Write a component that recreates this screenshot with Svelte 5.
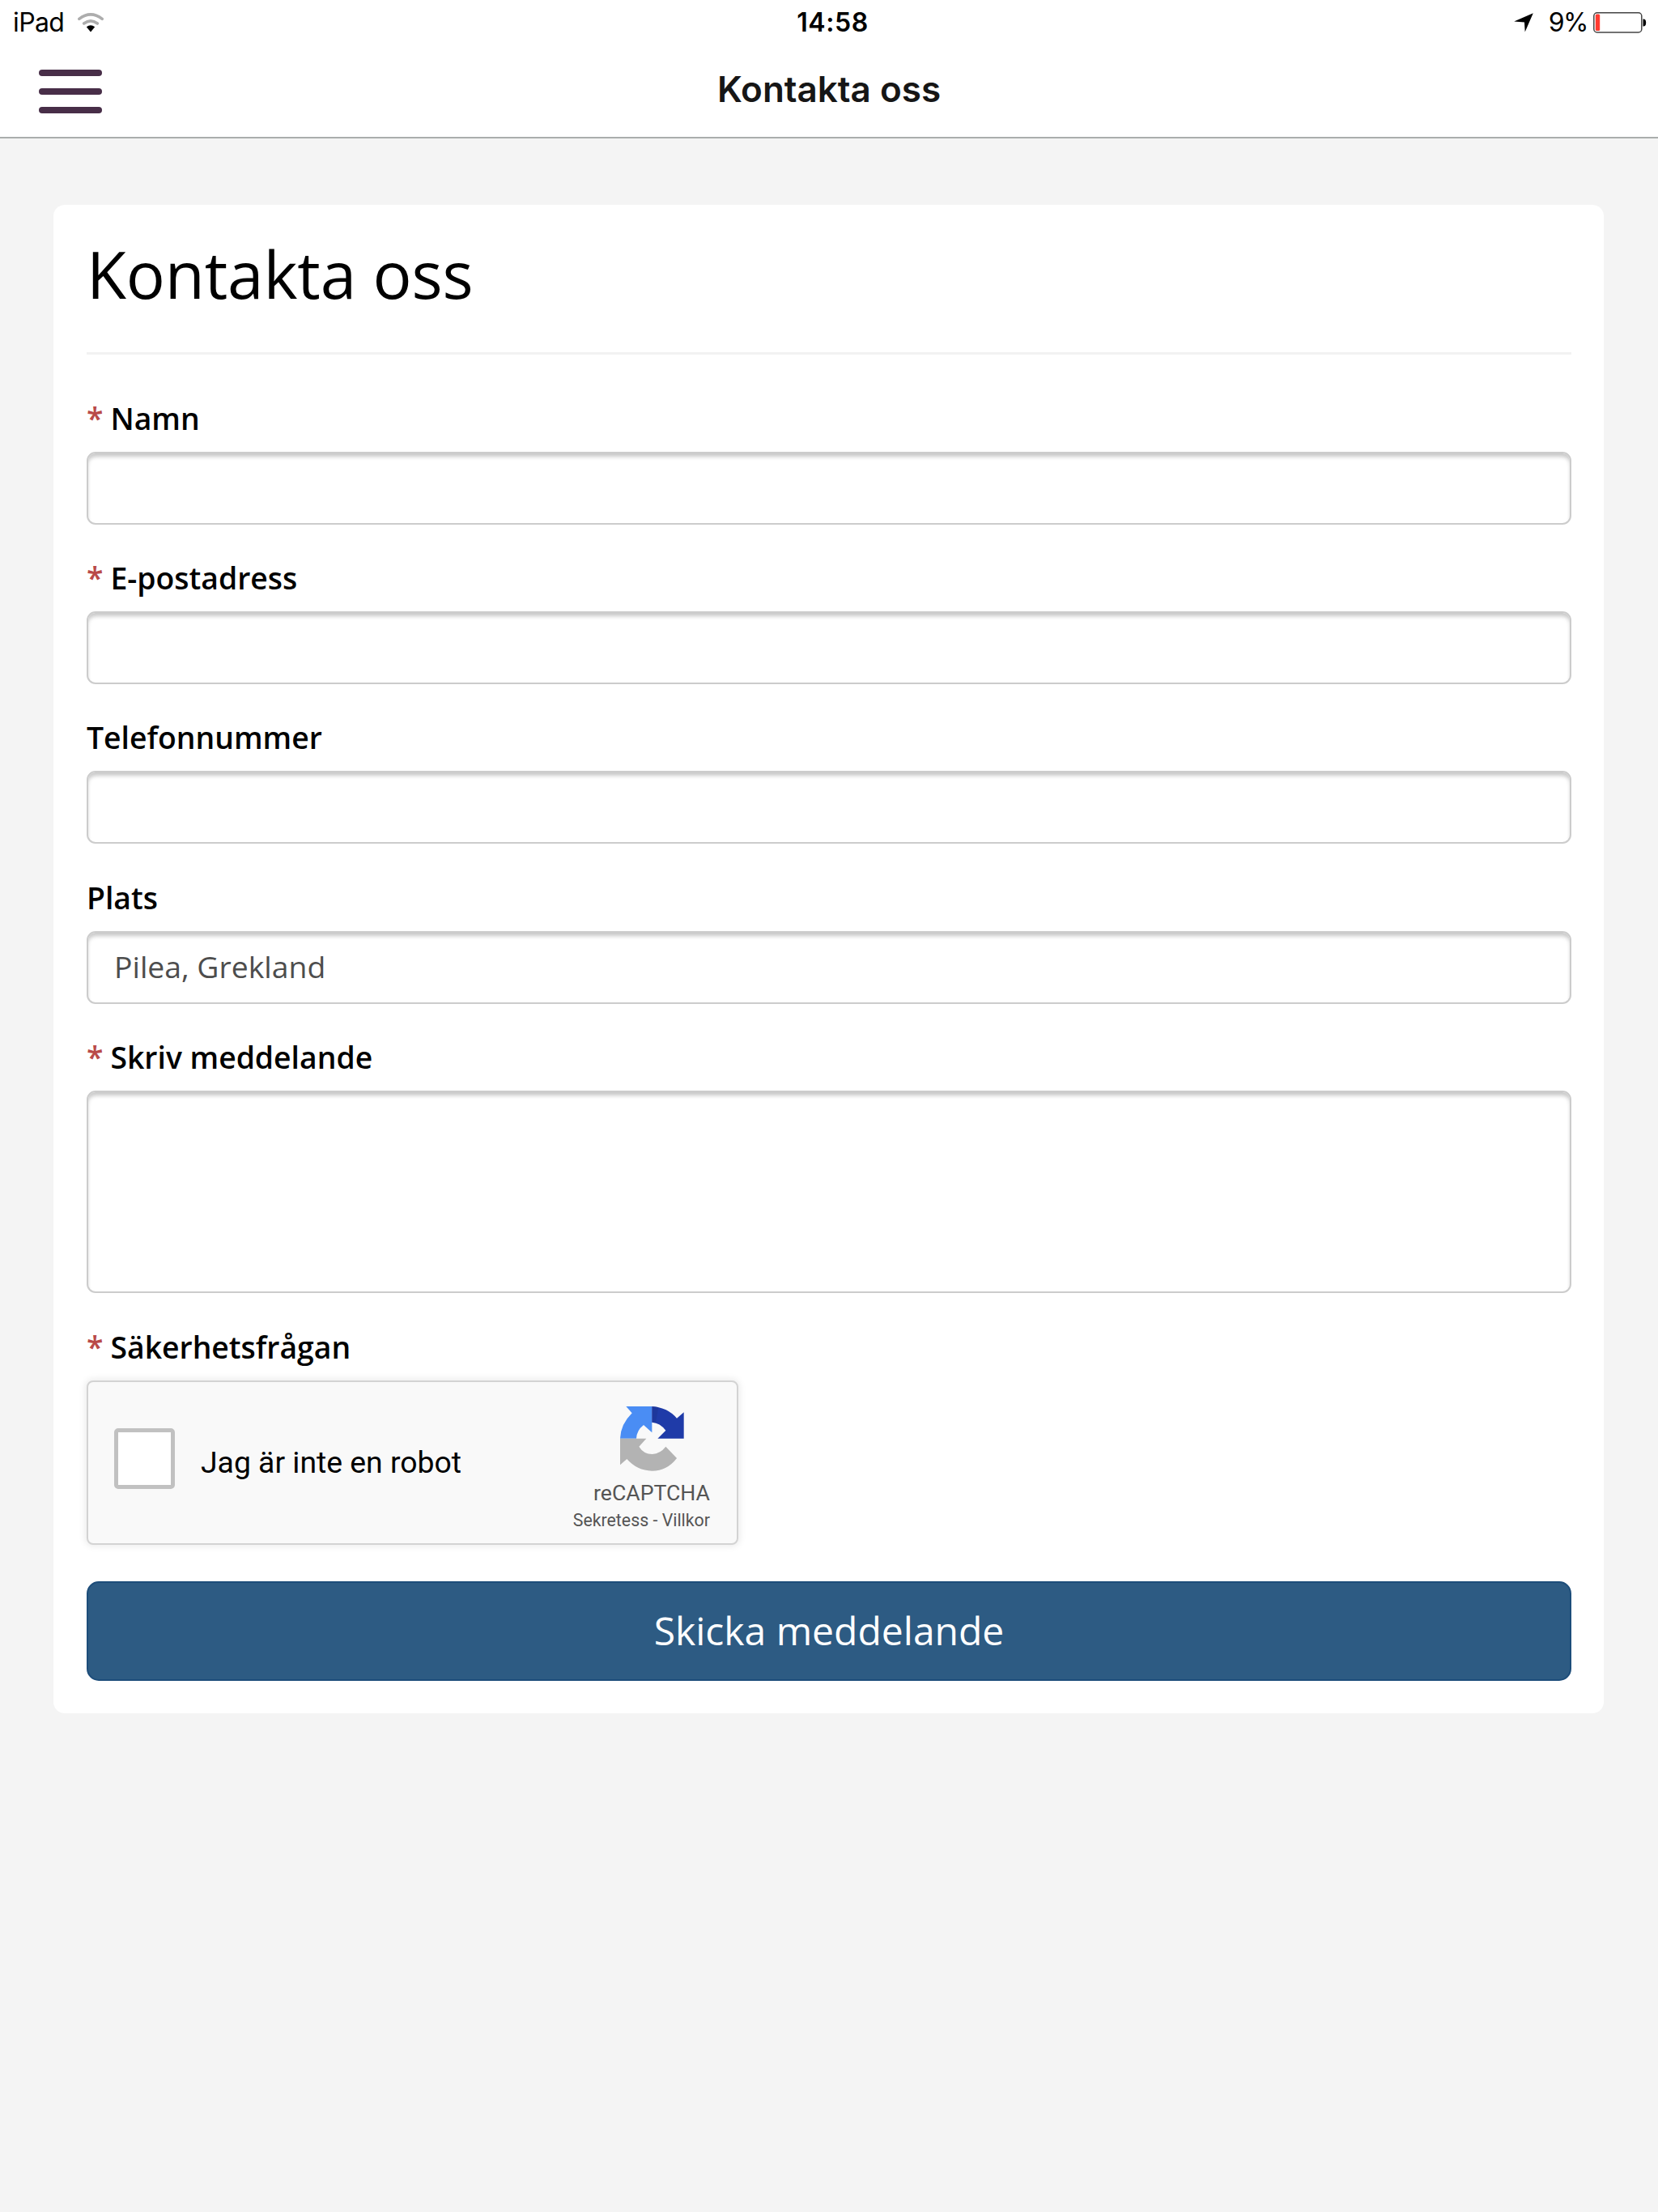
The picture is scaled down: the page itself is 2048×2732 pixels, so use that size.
<script>
  const fields = [
    { id: 'name', label: 'Namn', required: true, value: '' },
    { id: 'email', label: 'E-postadress', required: true, value: '' },
    { id: 'phone', label: 'Telefonnummer', required: false, value: '' },
    { id: 'place', label: 'Plats', required: false, value: 'Pilea, Grekland' },
  ];
</script>

<div class="screen">
  <header>
    <div class="status">
      <div class="carrier">
        <span>iPad</span>
        <svg class="wifi" viewBox="0 0 32 24" width="32" height="24">
          <path d="M1.8 7.4 Q16 -3.6 30.2 7.4" fill="none" stroke="#adadad" stroke-width="3.6" stroke-linecap="round" />
          <path d="M7.6 13 Q16 6.6 24.4 13" fill="none" stroke="#adadad" stroke-width="3.6" stroke-linecap="round" />
          <path d="M10.8 17.3 Q16 13.4 21.2 17.3 L16 23.4 Z" fill="#000" />
        </svg>
      </div>
      <span class="time">14:58</span>
      <div class="power">
        <svg class="locate" viewBox="0 0 24 24" width="24" height="24">
          <path d="M23.8 .2 L13.7 23.6 L13 11.6 L.2 10.6 Z" fill="#000" />
        </svg>
        <span class="percent">9%</span>
        <svg class="battery" viewBox="0 0 66 26" width="66" height="26">
          <rect x=".8" y=".8" width="59" height="24.2" rx="4" fill="none" stroke="#444" stroke-width="1.5" />
          <rect x="2.8" y="2.6" width="5.4" height="20.4" rx="1.6" fill="#ff3b30" />
          <path d="M61.5 8.6 H62.5 Q65.2 9 65.2 13 T62.5 17.6 H61.5 Z" fill="#000" />
        </svg>
      </div>
    </div>
    <div class="nav">
      <button class="menu" aria-label="Meny"><i></i><i></i><i></i></button>
      <span class="nav-title">Kontakta oss</span>
    </div>
  </header>

  <main>
    <form class="card">
      <h1>Kontakta oss</h1>
      <hr />
      {#each fields as field (field.id)}
        <div class="field">
          <label for={field.id}>{#if field.required}<b>*</b>{/if}{field.label}</label>
          <input id={field.id} type="text" value={field.value} />
        </div>
      {/each}
      <div class="field">
        <label for="message"><b>*</b>Skriv meddelande</label>
        <textarea id="message"></textarea>
      </div>
      <div class="field">
        <label for="robot"><b>*</b>Säkerhetsfrågan</label>
        <div class="captcha">
          <button class="check" id="robot" type="button" aria-label="Jag är inte en robot"></button>
          <span class="robot">Jag är inte en robot</span>
          <div class="brand">
            <svg viewBox="558 143 236 240" width="78.7" height="80">
              <path d="M580 143 H676 V240 L645 212 Q619 232 618 262 H558 Q560 209 602 168 Z" fill="#4a8df4" />
              <path d="M676 143 Q734 147 768 187 L794 165 V262 H697 L727 232 Q706 204 676 202 Z" fill="#1f3ba8" />
              <path d="M676 143 L700 146 L690 203 L676 202 Z" fill="#1c3694" opacity=".6" />
              <path d="M558 262 H655 L628 292 Q645 320 677 320 Q707 318 727 292 L768 335 Q732 382 676 382 Q621 381 583 338 L558 360 Z" fill="#b3b3b3" />
            </svg>
            <span class="re">reCAPTCHA</span>
            <span class="terms">Sekretess - Villkor</span>
          </div>
        </div>
      </div>
      <button class="submit" type="button">Skicka meddelande</button>
    </form>
  </main>
</div>

<style>
  :global(body) {
    margin: 0;
    background: #f4f4f4;
  }
  .screen {
    box-sizing: border-box;
    width: 2048px;
    height: 2732px;
    overflow: hidden;
    background: #f4f4f4;
    font-family: 'Open Sans', sans-serif;
    color: #000;
  }
  header {
    box-sizing: border-box;
    height: 171px;
    background: #fff;
    border-bottom: 2px solid #aaaead;
    font-family: Inter, sans-serif;
  }
  .status {
    display: grid;
    grid-template-columns: 1fr auto 1fr;
    align-items: center;
    height: 55px;
    padding: 0 14px 0 16px;
    font-size: 32px;
    line-height: 55px;
  }
  .carrier,
  .power {
    display: flex;
    align-items: center;
  }
  .carrier {
    gap: 17px;
    letter-spacing: -0.6px;
  }
  .power {
    justify-content: flex-end;
  }
  .time {
    font-weight: 600;
    padding-left: 7px;
    letter-spacing: 0.6px;
  }
  .percent {
    margin: 0 7px 0 19px;
    letter-spacing: -1.5px;
  }
  .nav {
    display: grid;
    grid-template-columns: 1fr auto 1fr;
    align-items: center;
    height: 114px;
    padding: 0 48px;
  }
  .menu {
    display: flex;
    flex-direction: column;
    gap: 15.4px;
    width: 78px;
    padding: 2px 0 0;
    border: 0;
    background: none;
  }
  .menu i {
    height: 8px;
    border-radius: 4px;
    background: #482e48;
  }
  .nav-title {
    padding-bottom: 4px;
    font-size: 44px;
    font-weight: 600;
    color: #161616;
  }
  main {
    padding: 82px 67px 0 66px;
  }
  .card {
    box-sizing: border-box;
    display: flex;
    flex-direction: column;
    height: 1862.6px;
    padding: 0 40px 0 41px;
    border-radius: 14px;
    background: #fff;
  }
  h1 {
    margin: 0;
    height: 182px;
    font-size: 80px;
    font-weight: 400;
    line-height: 170px;
    letter-spacing: -0.15px;
  }
  hr {
    width: 100%;
    height: 3px;
    margin: 0 0 52px;
    border: 0;
    background: #f2f2f2;
  }
  .field {
    display: flex;
    flex-direction: column;
    margin-bottom: 39.2px;
  }
  label {
    height: 68px;
    font-size: 37.33px;
    font-weight: 600;
    line-height: 54px;
    white-space: pre;
  }
  label b {
    margin-right: 9px;
    font-weight: 600;
    color: #b94a48;
  }
  input,
  textarea {
    box-sizing: border-box;
    width: 100%;
    height: 90px;
    margin: 0;
    padding: 0 32px 2px;
    border: 2px solid #ccc;
    border-radius: 11px;
    background: #fff;
    box-shadow: inset 0 5px 5px -1px rgba(0, 0, 0, 0.22);
    font: 400 37.33px 'Open Sans', sans-serif;
    color: #4d4d4d;
    resize: none;
    outline: none;
  }
  textarea {
    height: 250.6px;
  }
  .captcha {
    box-sizing: border-box;
    display: flex;
    align-items: center;
    width: 805px;
    height: 203px;
    padding: 0 33px 0 32px;
    border: 2.5px solid #d3d3d3;
    border-radius: 8px;
    background: #f9f9f9;
    box-shadow: 0 0 8px 2px rgba(0, 0, 0, 0.08);
    font-family: Roboto, sans-serif;
  }
  .check {
    box-sizing: border-box;
    width: 75px;
    height: 75px;
    margin: 0 32px 9px 0;
    padding: 0;
    border: 5.4px solid #c1c1c1;
    border-radius: 5px;
    background: #fff;
  }
  .robot {
    font-size: 37.33px;
  }
  .brand {
    display: flex;
    flex-direction: column;
    align-items: flex-end;
    margin: 19px 0 0 auto;
    color: #555;
  }
  .brand svg {
    margin-right: 32px;
  }
  .re {
    margin-top: 10px;
    font-size: 26.67px;
    line-height: 34px;
  }
  .terms {
    font-size: 21.33px;
    line-height: 34px;
  }
  .submit {
    box-sizing: border-box;
    height: 123px;
    margin-top: 6px;
    padding: 0 0 2px;
    border: 2px solid #1d4d7a;
    border-radius: 15px;
    background: #2d5b83;
    color: #fff;
    font: 400 48px 'Open Sans', sans-serif;
  }
</style>
